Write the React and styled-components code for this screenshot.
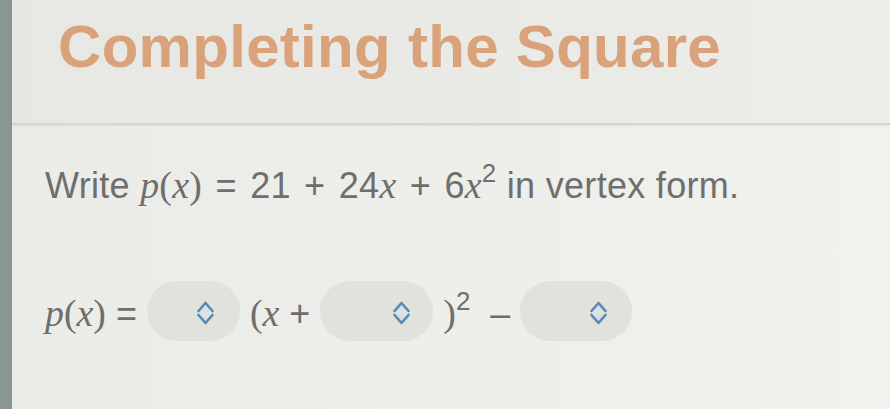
import styled, { createGlobalStyle } from "styled-components";

const Global = createGlobalStyle`
  html, body {
    margin: 0;
    padding: 0;
    background: #ececE8;
  }
  body {
    font-family: "Liberation Sans", Arial, sans-serif;
  }
`;

const Page = styled.div`
  display: flex;
  width: 890px;
  height: 409px;
  overflow: hidden;
  background: linear-gradient(90deg, #ebebe7 0%, #eeeeea 60%, #f1f1ee 100%);
`;

const Stripe = styled.div`
  width: 12px;
  flex-shrink: 0;
  background: #8a9692;
`;

const Main = styled.div`
  flex: 1;
  display: flex;
  flex-direction: column;
`;

const Header = styled.div`
  height: 125px;
  box-sizing: border-box;
  padding: 12px 0 0 46px;
  background: linear-gradient(90deg, #e7e7e3 0%, #eaeae6 70%, #eeeeeb 100%);
  border-bottom: 2px solid #d5d5d1;
  box-shadow: 0 1px 2px rgba(0, 0, 0, 0.06);
`;

const Title = styled.h1`
  margin: 0;
  font-family: "Liberation Sans", Arial, sans-serif;
  font-weight: 700;
  font-size: 60px;
  line-height: 70px;
  color: #d9a27a;
  letter-spacing: 0.3px;
`;

const Body = styled.div`
  padding: 40px 0 0 33px;
  display: flex;
  flex-direction: column;
  gap: 75px;
`;

const Question = styled.p`
  margin: 0;
  font-size: 36px;
  line-height: 40px;
  color: #6e6e6c;
  white-space: nowrap;
  letter-spacing: 0.3px;
`;

const M = styled.span`
  font-family: "Liberation Serif", "Times New Roman", serif;
  font-style: ${(p) => (p.$upright ? "normal" : "italic")};
  font-size: 1.05em;
`;

const Op = styled.span`
  margin: 0 3px;
`;

const Sup = styled.sup`
  font-size: 0.72em;
  vertical-align: 0.6em;
  line-height: 0;
`;

const Row = styled.div`
  display: flex;
  align-items: center;
  gap: 10px;
  font-size: 36px;
  color: #6e6e6c;
  height: 60px;
`;

const Expr = styled.span`
  white-space: pre;
  margin-top: 4px;
`;

const Select = styled.div`
  width: ${(p) => p.$w}px;
  height: 60px;
  border-radius: 30px;
  background: #e1e2de;
  display: flex;
  align-items: center;
  justify-content: flex-end;
  padding: 4px ${(p) => p.$pr}px 0 0;
  box-sizing: border-box;
`;

const Chevrons = () => (
  <svg width="19" height="28" viewBox="0 0 19 28">
    <path d="M2.5 12 L9.5 4 L16.5 12 Z" fill="#d4e2ef" />
    <path d="M2.5 16 L9.5 24 L16.5 16 Z" fill="#d4e2ef" />
    <path
      d="M2.5 12 L9.5 4 L16.5 12"
      fill="none"
      stroke="#5c87b3"
      strokeWidth="2.6"
      strokeLinecap="round"
      strokeLinejoin="round"
    />
    <path
      d="M2.5 16 L9.5 24 L16.5 16"
      fill="none"
      stroke="#5c87b3"
      strokeWidth="2.6"
      strokeLinecap="round"
      strokeLinejoin="round"
    />
  </svg>
);

export default function App() {
  return (
    <>
      <Global />
      <Page>
        <Stripe />
        <Main>
          <Header>
            <Title>Completing the Square</Title>
          </Header>
          <Body>
            <Question>
              Write <M>p</M>
              <M $upright>(</M>
              <M>x</M>
              <M $upright>)</M> <Op>=</Op> 21 <Op>+</Op> 24<M>x</M> <Op>+</Op> 6
              <M>x</M>
              <Sup>2</Sup> in vertex form.
            </Question>
            <Row>
              <Expr>
                <M>p</M>
                <M $upright>(</M>
                <M>x</M>
                <M $upright>)</M> =
              </Expr>
              <Select $w={93} $pr={25}>
                <Chevrons />
              </Select>
              <Expr>
                <M $upright>(</M>
                <M>x</M> +
              </Expr>
              <Select $w={113} $pr={22}>
                <Chevrons />
              </Select>
              <Expr>
                <M $upright>)</M>
                <Sup>2</Sup>  –
              </Expr>
              <Select $w={112} $pr={24}>
                <Chevrons />
              </Select>
            </Row>
          </Body>
        </Main>
      </Page>
    </>
  );
}
